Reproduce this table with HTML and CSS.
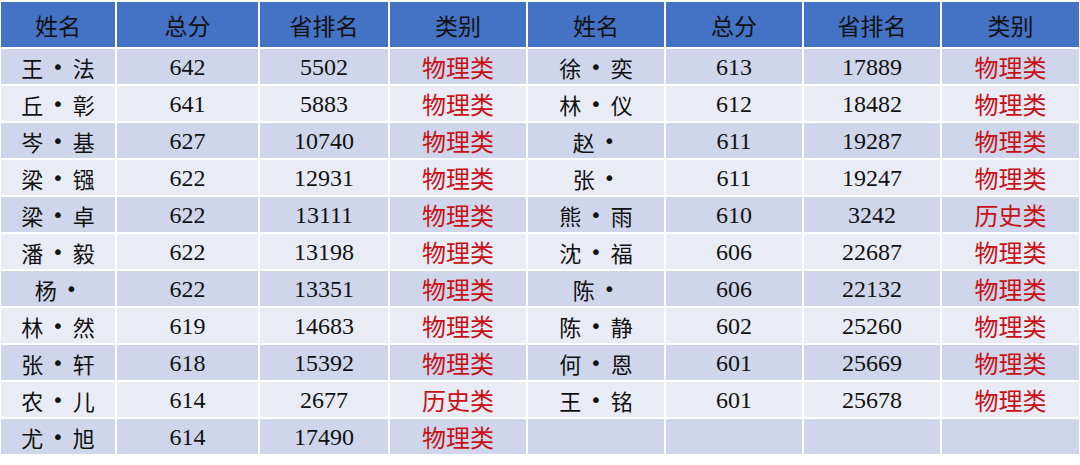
FILE: index.html
```html
<!DOCTYPE html>
<html lang="zh">
<head>
<meta charset="utf-8">
<title>成绩表</title>
<link rel="stylesheet" href="styles.css">
</head>
<body>
<div class="sheet">
  <div class="grid">
    <div class="c h">姓名</div><div class="c h">总分</div><div class="c h">省排名</div><div class="c h">类别</div>
    <div class="c h">姓名</div><div class="c h">总分</div><div class="c h">省排名</div><div class="c h">类别</div>

    <div class="c o n">王 <span class="dot">•</span> 法</div><div class="c o d">642</div><div class="c o d">5502</div><div class="c o r">物理类</div>
    <div class="c o n">徐 <span class="dot">•</span> 奕</div><div class="c o d">613</div><div class="c o d">17889</div><div class="c o r">物理类</div>

    <div class="c e n">丘 <span class="dot">•</span> 彰</div><div class="c e d">641</div><div class="c e d">5883</div><div class="c e r">物理类</div>
    <div class="c e n">林 <span class="dot">•</span> 仪</div><div class="c e d">612</div><div class="c e d">18482</div><div class="c e r">物理类</div>

    <div class="c o n">岑 <span class="dot">•</span> 基</div><div class="c o d">627</div><div class="c o d">10740</div><div class="c o r">物理类</div>
    <div class="c o n">赵 <span class="dot">•</span></div><div class="c o d">611</div><div class="c o d">19287</div><div class="c o r">物理类</div>

    <div class="c e n">梁 <span class="dot">•</span> 镪</div><div class="c e d">622</div><div class="c e d">12931</div><div class="c e r">物理类</div>
    <div class="c e n">张 <span class="dot">•</span></div><div class="c e d">611</div><div class="c e d">19247</div><div class="c e r">物理类</div>

    <div class="c o n">梁 <span class="dot">•</span> 卓</div><div class="c o d">622</div><div class="c o d">13111</div><div class="c o r">物理类</div>
    <div class="c o n">熊 <span class="dot">•</span> 雨</div><div class="c o d">610</div><div class="c o d">3242</div><div class="c o r">历史类</div>

    <div class="c e n">潘 <span class="dot">•</span> 毅</div><div class="c e d">622</div><div class="c e d">13198</div><div class="c e r">物理类</div>
    <div class="c e n">沈 <span class="dot">•</span> 福</div><div class="c e d">606</div><div class="c e d">22687</div><div class="c e r">物理类</div>

    <div class="c o n">杨 <span class="dot">•</span></div><div class="c o d">622</div><div class="c o d">13351</div><div class="c o r">物理类</div>
    <div class="c o n">陈 <span class="dot">•</span></div><div class="c o d">606</div><div class="c o d">22132</div><div class="c o r">物理类</div>

    <div class="c e n">林 <span class="dot">•</span> 然</div><div class="c e d">619</div><div class="c e d">14683</div><div class="c e r">物理类</div>
    <div class="c e n">陈 <span class="dot">•</span> 静</div><div class="c e d">602</div><div class="c e d">25260</div><div class="c e r">物理类</div>

    <div class="c o n">张 <span class="dot">•</span> 轩</div><div class="c o d">618</div><div class="c o d">15392</div><div class="c o r">物理类</div>
    <div class="c o n">何 <span class="dot">•</span> 恩</div><div class="c o d">601</div><div class="c o d">25669</div><div class="c o r">物理类</div>

    <div class="c e n">农 <span class="dot">•</span> 儿</div><div class="c e d">614</div><div class="c e d">2677</div><div class="c e r">历史类</div>
    <div class="c e n">王 <span class="dot">•</span> 铭</div><div class="c e d">601</div><div class="c e d">25678</div><div class="c e r">物理类</div>

    <div class="c o n">尤 <span class="dot">•</span> 旭</div><div class="c o d">614</div><div class="c o d">17490</div><div class="c o r">物理类</div>
    <div class="c o n"></div><div class="c o d"></div><div class="c o d"></div><div class="c o r"></div>
  </div>
</div>
</body>
</html>
```

FILE: styles.css
```css
html, body {
  margin: 0;
  padding: 0;
  background: #ffffff;
}

.sheet {
  padding: 2px 0 0 1px;
}

.grid {
  display: grid;
  grid-template-columns: 114px 141px 128px 136px 136px 136px 136px 137px;
  grid-template-rows: 45px repeat(11, 35px);
  gap: 2px;
  width: max-content;
}

.c {
  display: flex;
  align-items: center;
  justify-content: center;
  font-size: 22px;
  color: #111111;
  white-space: pre;
}

.h {
  background: #4472c4;
  font-family: "Noto Sans CJK SC", "Noto Sans", sans-serif;
  font-size: 23px;
  color: #111111;
}

.o {
  background: #cfd5ea;
}

.e {
  background: #e9ebf5;
}

.n {
  font-family: "Noto Sans CJK SC", "Noto Sans", sans-serif;
  font-size: 22px;
}

.dot {
  font-family: "DejaVu Sans", sans-serif;
  font-size: 20px;
  margin: 0 4px;
}

.d {
  font-family: "Liberation Serif", "Times New Roman", serif;
  font-size: 24px;
  padding-top: 2px;
}

.r {
  font-family: "Noto Sans CJK SC", "Noto Sans", sans-serif;
  font-size: 24px;
  color: #c81015;
}
```
